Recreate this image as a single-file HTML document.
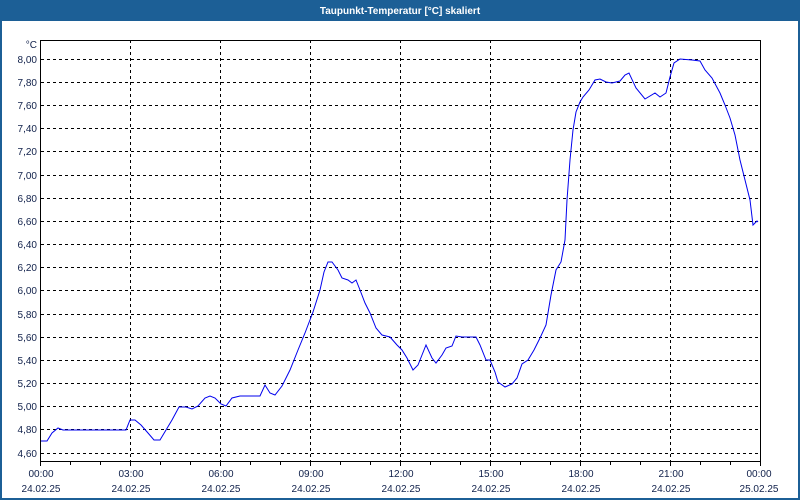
<!DOCTYPE html>
<html><head><meta charset="utf-8"><style>
html,body{margin:0;padding:0;background:#fff;}
svg{display:block}
text{font-family:"Liberation Sans",sans-serif;font-size:10px;fill:#10204a}
</style></head><body>
<svg width="800" height="500" xmlns="http://www.w3.org/2000/svg">
<rect x="0" y="0" width="800" height="500" fill="#1c5f96"/>
<rect x="2" y="21" width="796" height="477" fill="#fff"/>
<text x="400" y="14" text-anchor="middle" style="fill:#fff;font-weight:bold;font-size:10px">Taupunkt-Temperatur [°C] skaliert</text>
<g stroke="#000" stroke-width="1" stroke-dasharray="3,3" shape-rendering="crispEdges">
<line x1="41" x2="760" y1="59.5" y2="59.5"/><line x1="41" x2="760" y1="82.5" y2="82.5"/><line x1="41" x2="760" y1="105.5" y2="105.5"/><line x1="41" x2="760" y1="128.5" y2="128.5"/><line x1="41" x2="760" y1="151.5" y2="151.5"/><line x1="41" x2="760" y1="175.5" y2="175.5"/><line x1="41" x2="760" y1="198.5" y2="198.5"/><line x1="41" x2="760" y1="221.5" y2="221.5"/><line x1="41" x2="760" y1="244.5" y2="244.5"/><line x1="41" x2="760" y1="267.5" y2="267.5"/><line x1="41" x2="760" y1="290.5" y2="290.5"/><line x1="41" x2="760" y1="314.5" y2="314.5"/><line x1="41" x2="760" y1="337.5" y2="337.5"/><line x1="41" x2="760" y1="360.5" y2="360.5"/><line x1="41" x2="760" y1="383.5" y2="383.5"/><line x1="41" x2="760" y1="406.5" y2="406.5"/><line x1="41" x2="760" y1="429.5" y2="429.5"/><line x1="41" x2="760" y1="453.5" y2="453.5"/>
<line x1="130.5" x2="130.5" y1="40" y2="461"/><line x1="220.5" x2="220.5" y1="40" y2="461"/><line x1="310.5" x2="310.5" y1="40" y2="461"/><line x1="400.5" x2="400.5" y1="40" y2="461"/><line x1="490.5" x2="490.5" y1="40" y2="461"/><line x1="580.5" x2="580.5" y1="40" y2="461"/><line x1="670.5" x2="670.5" y1="40" y2="461"/>
</g>
<rect x="40.5" y="40.5" width="720" height="421" fill="none" stroke="#000" shape-rendering="crispEdges"/>
<g stroke="#000" shape-rendering="crispEdges">
<path d="M40.5 461v5M70.5 461v4M100.5 461v4M130.5 461v5M160.5 461v4M190.5 461v4M220.5 461v5M250.5 461v4M280.5 461v4M310.5 461v5M340.5 461v4M370.5 461v4M400.5 461v5M430.5 461v4M460.5 461v4M490.5 461v5M520.5 461v4M550.5 461v4M580.5 461v5M610.5 461v4M640.5 461v4M670.5 461v5M700.5 461v4M730.5 461v4M760.5 461v5"/>
</g>
<g text-anchor="end">
<text x="37" y="48">°C</text>
<text x="37" y="63">8,00</text><text x="37" y="86">7,80</text><text x="37" y="109">7,60</text><text x="37" y="132">7,40</text><text x="37" y="155">7,20</text><text x="37" y="179">7,00</text><text x="37" y="202">6,80</text><text x="37" y="225">6,60</text><text x="37" y="248">6,40</text><text x="37" y="271">6,20</text><text x="37" y="294">6,00</text><text x="37" y="318">5,80</text><text x="37" y="341">5,60</text><text x="37" y="364">5,40</text><text x="37" y="387">5,20</text><text x="37" y="410">5,00</text><text x="37" y="433">4,80</text><text x="37" y="457">4,60</text>
</g>
<g text-anchor="middle">
<text x="41" y="477">00:00</text><text x="131" y="477">03:00</text><text x="221" y="477">06:00</text><text x="311" y="477">09:00</text><text x="401" y="477">12:00</text><text x="491" y="477">15:00</text><text x="581" y="477">18:00</text><text x="671" y="477">21:00</text><text x="759" y="477">00:00</text>
<text x="41" y="492">24.02.25</text><text x="131" y="492">24.02.25</text><text x="221" y="492">24.02.25</text><text x="311" y="492">24.02.25</text><text x="401" y="492">24.02.25</text><text x="491" y="492">24.02.25</text><text x="581" y="492">24.02.25</text><text x="671" y="492">24.02.25</text><text x="759" y="492">25.02.25</text>
</g>
<polyline fill="none" stroke="#0000ee" stroke-width="1" points="41,441 47,441 52,433 58,428 63,430 126,430 130,420 135,420 141,425 148,433 154,440 160,440 166,430 172,420 179,407 186,407 192,409 198,406 205,398 210,396 215,398 221,404 226,406 232,398 240,396 260,396 265,385 270,393 275,395 282,386 290,370 298,350 305,333 313,312 320,290 324,272 328,262 332,262 338,270 342,278 348,280 352,283 356,280 360,290 365,303 370,313 376,328 382,335 390,337 397,345 402,350 407,358 413,370 418,365 422,355 426,345 432,358 436,363 442,355 446,348 452,346 456,336 462,337 476,337 480,345 486,360 490,360 495,372 498,382 505,387 512,384 517,378 522,364 528,360 534,350 540,338 546,325 551,295 556,270 561,262 565,240 567,200 570,160 573,130 576,112 580,102 583,97 589,90 595,80 600,79 606,82 612,83 620,81 625,75 629,73 636,88 645,99 655,93 660,97 666,93 670,77 674,63 680,59 692,60 700,61 705,70 712,78 720,93 725,105 730,118 735,135 740,160 745,180 750,200 753,225 757,221 758,222"/>
</svg>
</body></html>
